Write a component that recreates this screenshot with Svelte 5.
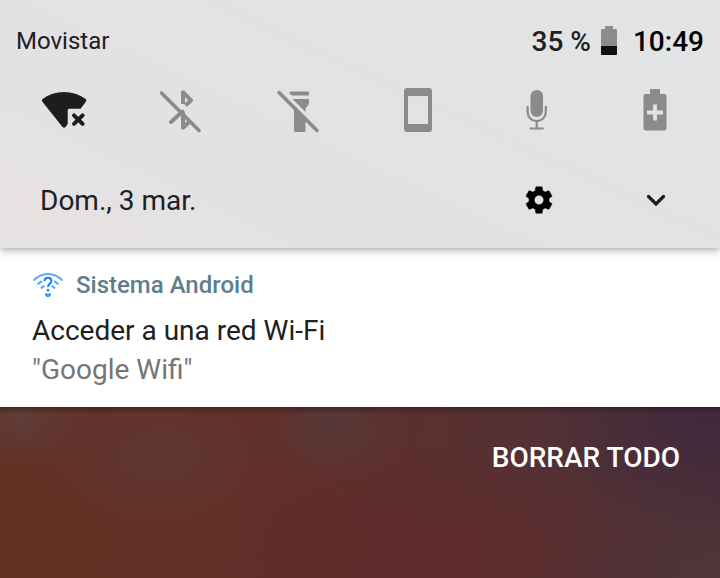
<script>
  const carrier = 'Movistar';
  const battery = '35 %';
  const time = '10:49';
  const today = 'Dom., 3 mar.';
</script>

<div class="shade">
  <header class="panel">
    <div class="status">
      <span class="carrier">{carrier}</span>
      <span class="level">{battery}</span>
      <svg class="battery" viewBox="0 0 16 29" aria-hidden="true">
        <path d="M4 0h8v3h3q1 0 1 1v16H0V4q0-1 1-1h3z" fill="#8b8c8d" />
        <path d="M0 20h16v8q0 1-1 1H1q-1 0-1-1z" fill="#111" />
      </svg>
      <time>{time}</time>
    </div>

    <div class="tiles">
      <button class="on" aria-label="Wi-Fi">
        <svg viewBox="0 0 48 48">
          <path fill="currentColor" d="M4.200 15.400Q3.200 14.100 4.500 13Q14 6 26 6T47.700 13Q49 14.100 48 15.400L42.600 22.700H31Q29.700 22.700 29.700 24.500V38L27.600 41Q26 42.500 24.500 41Z" />
          <path stroke="currentColor" stroke-width="4" stroke-linecap="round" d="m36 29.300 8.600 8.600m0-8.600L36 37.900" />
        </svg>
      </button>
      <button aria-label="Bluetooth">
        <svg viewBox="0 0 48 48" fill="none" stroke="currentColor" stroke-width="4" stroke-linecap="round" stroke-linejoin="round">
          <path d="m4.500 7 37.500 37.500" stroke-width="3.600" />
          <path d="M26 18V6.200L34 14.300 28.500 19.500" stroke-linecap="butt" />
          <path d="m14 36 11.500-10.500M26 27v14.800l5.500-5.300" />
        </svg>
      </button>
      <button aria-label="Linterna">
        <svg viewBox="0 0 48 48">
          <g fill="currentColor">
            <path d="M14.500 6.500q0-1 1-1h17.500q1 0 1 1v2q0 1-1 1H17q-2.500-1-2.500-3z" />
            <path d="M17.500 13H34v3q0 2.500-1.700 4.300-1.800 1.700-1.800 3V26zM19 21.500l11.500 11.500v11.500q0 1.500-1.500 1.500h-8.500q-1.500 0-1.500-1.500z" />
          </g>
          <path d="m4 6.500 38 38" stroke="currentColor" stroke-width="3.600" stroke-linecap="round" />
        </svg>
      </button>
      <button aria-label="Girar automáticamente">
        <svg viewBox="0 0 48 48">
          <path fill="currentColor" fill-rule="evenodd" d="M13 2h22q3 0 3 3v38q0 3-3 3H13q-3 0-3-3V5q0-3 3-3zm1 8v28h20V10z" />
        </svg>
      </button>
      <button aria-label="Micrófono">
        <svg viewBox="0 0 48 48">
          <rect x="18.500" y="4" width="12.500" height="27" rx="6.200" fill="currentColor" />
          <path d="M15.600 20v6a9.100 9.100 0 0 0 18.200 0v-6M24.700 35v7M17.700 42.500h14" fill="none" stroke="currentColor" stroke-width="2.200" />
        </svg>
      </button>
      <button aria-label="Ahorro de batería">
        <svg viewBox="0 0 48 48">
          <path fill="currentColor" d="M19 3h10v5h4.500q2 0 2 2v32.500q0 2-2 2h-19q-2 0-2-2V10q0-2 2-2H19z" />
          <path d="M24 18.500v16m-8-8h16" stroke="#e2e3e5" stroke-width="3.800" />
        </svg>
      </button>
    </div>

    <div class="footer">
      <span class="date">{today}</span>
      <button class="gear" aria-label="Ajustes">
        <svg viewBox="0 0 24 24">
          <path fill="#000" stroke="#000" stroke-width=".3" d="M19.430 12.980c.04-.32.07-.64.07-.98s-.03-.66-.07-.98l2.110-1.650c.19-.15.24-.42.12-.64l-2-3.460c-.12-.22-.39-.3-.61-.22l-2.490 1c-.52-.4-1.080-.73-1.690-.98l-.38-2.650A.488.488 0 0 0 14 2h-4c-.25 0-.46.18-.49.42l-.38 2.650c-.61.25-1.170.59-1.690.98l-2.490-1c-.23-.09-.49 0-.61.22l-2 3.460c-.13.22-.07.49.12.64l2.110 1.650c-.04.32-.07.65-.07.98s.03.66.07.98l-2.110 1.650c-.19.15-.24.42-.12.64l2 3.460c.12.22.39.3.61.22l2.490-1c.52.4 1.080.73 1.690.98l.38 2.650c.03.24.24.42.49.42h4c.25 0 .46-.18.49-.42l.38-2.650c.61-.25 1.170-.59 1.690-.98l2.490 1c.23.09.49 0 .61-.22l2-3.460c.12-.22.07-.49-.12-.64zM12 15.500a3.500 3.500 0 1 1 0-7 3.500 3.500 0 0 1 0 7z" />
        </svg>
      </button>
      <button aria-label="Expandir">
        <svg viewBox="0 0 48 48">
          <path d="m16.500 20.500 7.500 7.500 7.500-7.500" fill="none" stroke="#1d1d1f" stroke-width="3.200" stroke-linecap="round" />
        </svg>
      </button>
    </div>
  </header>

  <main>
    <article>
      <div class="app">
        <svg viewBox="0 0 32 26" fill="none" stroke="#55a8ff" stroke-width="1.800" aria-hidden="true">
          <path d="M1.500 8.500Q8 2 16 2t14.500 6.500" />
          <path d="M5.500 12.500q2-2.200 4.500-3.200M26.500 12.500q-2-2.200-4.500-3.200M9 16.500q1.500-1.800 3.500-2.500M23 16.500q-1.500-1.800-3.500-2.500" stroke-width="2" />
          <path d="M12.500 9q.3-3.200 3.500-3.200t3.500 3q0 1.500-1.700 2.800T16 15" stroke="#147ff5" stroke-width="2" />
          <path d="M16 17v2.300" stroke="#147ff5" stroke-width="2.400" />
          <path d="M13 21q1.500.8 3 .8t3-.8q.6 4-3 4t-3-4z" fill="#3d9bff" stroke="none" />
        </svg>
        <span>Sistema Android</span>
      </div>
      <h1>Acceder a una red Wi-Fi</h1>
      <p>"Google Wifi"</p>
    </article>
  </main>

  <div class="actions">
    <button>BORRAR TODO</button>
  </div>
</div>

<style>
  :global(body) {
    margin: 0;
  }
  .shade {
    min-height: 100vh;
    display: flex;
    flex-direction: column;
    font-family: Roboto, "Noto Sans", sans-serif;
    font-size: 28px;
    color: #202022;
  }
  button {
    border: 0;
    padding: 0;
    background: none;
    color: inherit;
    font: inherit;
    cursor: pointer;
  }
  svg {
    display: block;
    overflow: visible;
  }
  .panel {
    position: relative;
    background: linear-gradient(25deg, #e6e2e1 0%, #e3e1e4 38%, #e2e3e5 70%, #e3e4e6 100%);
    box-shadow: 0 2px 8px rgba(0, 0, 0, 0.35);
  }
  .status {
    display: flex;
    align-items: center;
    height: 82px;
    padding: 0 16px;
    font-weight: 500;
  }
  .carrier {
    flex: 1;
    font-size: 24px;
    font-weight: 400;
  }
  .battery {
    width: 16px;
    height: 29px;
    margin: 0 16px 2px 10px;
  }
  time {
    color: #000;
  }
  .tiles {
    display: flex;
    justify-content: space-between;
    padding: 4px 41px 18px 38px;
    color: #8b8b8c;
  }
  .tiles svg,
  .footer svg {
    width: 48px;
    height: 48px;
  }
  .on {
    color: #1d1d1e;
  }
  .footer {
    display: flex;
    align-items: center;
    height: 96px;
    padding: 0 40px;
  }
  .date {
    flex: 1;
  }
  .footer .gear {
    padding: 8px;
    margin-right: 69px;
  }
  .footer .gear svg {
    width: 32px;
    height: 32px;
  }
  article {
    padding: 22px 32px 18px;
    background: #fff;
  }
  .app {
    display: flex;
    align-items: center;
    gap: 12px;
    height: 30px;
    color: #607d8b;
    font-size: 24px;
    font-weight: 500;
  }
  .app svg {
    width: 32px;
    height: 26px;
  }
  h1,
  p {
    margin: 0;
    font-size: 28px;
    font-weight: 400;
    line-height: 39px;
  }
  h1 {
    margin-top: 11px;
  }
  p {
    color: #757575;
  }
  .actions {
    flex: 1;
    display: flex;
    justify-content: flex-end;
    align-items: flex-start;
    padding: 30px 40px;
    background:
      linear-gradient(#0004, #0000 7px),
      radial-gradient(ellipse 80px 60px at 46% 12%, #543b3bcc, #543b3b00),
      radial-gradient(ellipse 70px 50px at 3% 8%, #5f403ccc, #5f403c00),
      radial-gradient(ellipse 120px 80px at 22% 28%, #603833, #60383300),
      radial-gradient(ellipse 180px 120px at 100% 0%, #40293d, #40293d00),
      radial-gradient(ellipse 180px 110px at 100% 100%, #503539, #50353900),
      radial-gradient(ellipse 240px 110px at 62% 85%, #602b2a, #602b2a00),
      radial-gradient(ellipse 280px 150px at 0% 75%, #633121, #63312100),
      linear-gradient(100deg, #632f28, #622e29 42%, #543135 72%, #4a2e38);
    color: #fff;
  }
  .actions button {
    height: 40px;
    font-weight: 500;
  }
</style>
